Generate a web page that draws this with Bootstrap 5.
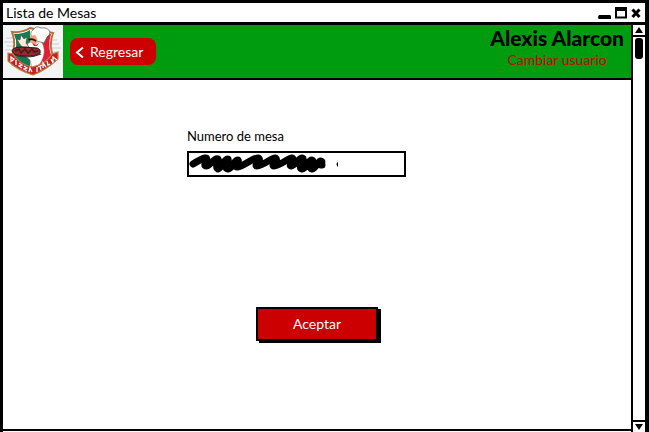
<!DOCTYPE html>
<html lang="es">
<head>
<meta charset="utf-8">
<meta name="viewport" content="width=device-width, initial-scale=1">
<title>Lista de Mesas</title>
<link href="https://cdn.jsdelivr.net/npm/bootstrap@5.3.0/dist/css/bootstrap.min.css" rel="stylesheet">
<style>
body { font-family: Lato, "Open Sans", sans-serif; font-size: 14px; line-height: 20px; color: #000; }
.app-window { border: 3px solid #000; border-right-width: 4px; border-bottom: 0; height: 100vh; }
.title-strip { border-bottom: 3px solid #000; padding: 0 4px 0 3px; height: 22px; }
.title-strip h1 { font-size: 14px; line-height: 18px; }
.win-btn { line-height: 0; }
.page-area { border-bottom: 2px solid #000; margin-bottom: 1px; }
.brand-bar { background: #009c10; border-bottom: 2px solid #000; height: 55px; }
.brand-logo { background: #f4f4f4; width: 60px; }
.back-btn, .back-btn:hover { background: #c00; color: #fff; border: 0; border-radius: 8px; width: 86px; height: 27px; margin-left: 7px; font-size: 14px; line-height: 20px; }
.user-box { padding-right: 7px; }
.user-name { font-size: 21px; line-height: 25px; font-weight: 900; }
.switch-link { color: #c00; }
.mesa-form { padding-top: 46px; }
.mesa-field { width: 219px; margin-right: 41px; }
.mesa-label { font-size: 13px; margin-bottom: 5px; }
.mesa-input, .mesa-input:focus { border: 2px solid #000; border-radius: 0; height: 26px; background: #fff; box-shadow: none; }
.scribble { left: 0; top: 0; pointer-events: none; }
.accept-btn, .accept-btn:hover { background: #c00; color: #fff; border: 2px solid #000; border-radius: 0; box-shadow: 3px 2px 0 #000; width: 122px; height: 34px; margin-top: 130px; font-size: 14px; line-height: 20px; }
.scroll-rail { width: 14px; border-left: 2px solid #000; }
.rail-btn { height: 12px; line-height: 0; }
.rail-up { border-bottom: 2px solid #000; }
.rail-down { border-top: 2px solid #000; }
.rail-thumb { width: 8px; height: 21px; background: #000; border-radius: 3px; margin-top: 1px; }
</style>
</head>
<body>
<div class="app-window d-flex flex-column overflow-hidden">
  <header class="title-strip d-flex align-items-center justify-content-between flex-shrink-0">
    <h1 class="fw-normal m-0">Lista de Mesas</h1>
    <div class="d-flex align-items-center gap-1">
      <button class="win-btn border-0 bg-transparent p-0" type="button" aria-label="Minimizar"><svg width="13" height="12"><path d="M1 8H12Q13 8 13 10V12H1Q0 12 0 10Z"/></svg></button>
      <button class="win-btn border-0 bg-transparent p-0" type="button" aria-label="Maximizar"><svg width="12" height="12"><path d="M1 1.5H11V10.5H1Z" fill="#fff" stroke="#000" stroke-width="2"/><path d="M0 2H12" stroke="#000" stroke-width="4"/></svg></button>
      <button class="win-btn border-0 bg-transparent p-0" type="button" aria-label="Cerrar"><svg width="10" height="12"><path d="M1.5 2.5L8.5 10M8.5 2.5L1.5 10" stroke="#000" stroke-width="3"/></svg></button>
    </div>
  </header>
  <div class="d-flex flex-grow-1">
    <div class="page-area flex-grow-1">
      <div class="brand-bar d-flex">
        <div class="brand-logo flex-shrink-0">
          <svg width="60" height="53" viewBox="0 0 60 53" role="img" aria-label="Pizza Italia">
            <path d="M3 13H12M1 17H13M4 21H12M2 25H12M48 15H54M47 19H56M48 23H58M47 27H56" stroke="#c9ccd6"/>
            <path d="M9 7Q19 8 27 3Q38 6 50 8Q45 21 51 33Q40 44 29 49Q18 44 8 34Q14 20 9 7Z" fill="#fff" stroke="#b5713b" stroke-width="2"/>
            <path d="M11 9Q21 9 27 5V44Q17 40 10 32Q16 20 11 9Z" fill="#167a55"/>
            <path d="M36 9L48 9Q44 21 49 33Q42 41 34 44Z" fill="#e41c35"/>
            <path d="M25 18L33 15L39 17Q43 25 40 33Q37 42 29 44L27 35L21 30Z" fill="#fff" stroke="#765" stroke-width=".6"/>
            <path d="M29 12Q26 8 30 5Q33 0 38 3Q45 2 47 7Q47 10 44 12L41 18L33 16Z" fill="#fff" stroke="#555" stroke-width=".7"/>
            <path d="M27 11L32 10L34 13L35 17L32 20L27 17Z" fill="#efa082"/>
            <path d="M26 15Q29 13 33 16" fill="none" stroke="#301010" stroke-width="1.8"/>
            <path d="M29 18L33 20L36 18L34 21L31 21Z" fill="#d52831"/>
            <path d="M16 18L14 14L17 15L18 10L21 14L24 12L23 18L26 22L19 22Z" fill="#ffe9db" stroke="#543" stroke-width=".6"/>
            <path d="M9 26Q10 22 19 22L34 23Q38 24 37 28Q32 32 21 31Q11 31 9 26Z" fill="#95292c" stroke="#2b1112"/>
            <path d="M12 26L16 24L18 28L22 24L25 28L29 24L31 27L35 26" stroke="#451a1c" stroke-width="1.6" fill="none"/>
            <path d="M9 29Q24 35 38 29" stroke="#333" stroke-width="1.2" fill="none"/>
            <path d="M5 28L10 29Q16 39 29 42Q43 39 49 29L55 27L55 34Q43 45 30 50Q14 45 5 36Z" fill="#c72027" stroke="#b78341" stroke-width="1.2"/>
            <path d="M8 37V32L11 34L9 36M13 35L13 40M16 38L19 40L16 41L19 43M21 41L24 43L21 44L24 46M26 47L27 43L29 47M34 42V47M35 42L39 40M37 41L38 45M40 43L40 38L43 42M44 36L45 40L47 39M48 34L50 38M50 37L50 32L54 35" fill="none" stroke="#fff" stroke-width="1.3"/>
          </svg>
        </div>
        <div class="d-flex align-items-center">
          <button class="back-btn btn d-flex align-items-center p-0" type="button"><svg class="ms-1 me-1" width="12" height="14" aria-hidden="true"><path d="M9 2.5L3 7.5L9 12.5" fill="none" stroke="#fff" stroke-width="2"/></svg><span>Regresar</span></button>
        </div>
        <div class="user-box ms-auto d-flex flex-column align-items-center">
          <span class="user-name">Alexis Alarcon</span>
          <a class="switch-link text-decoration-none" href="#">Cambiar usuario</a>
        </div>
      </div>
      <form class="mesa-form d-flex flex-column align-items-center">
        <div class="mesa-field">
          <label class="mesa-label d-block" for="mesa">Numero de mesa</label>
          <div class="position-relative">
            <input class="mesa-input form-control p-0" id="mesa" type="text">
            <svg class="scribble position-absolute" width="160" height="26" aria-hidden="true"><path d="M6 13Q14 8 18 7C23 6 15 15 19 15C23 15 28 6 31 8C33 10 27 16 31 18C35 17 38 7 41 8C43 10 36 17 41 18C46 17 48 8 51 9C53 11 46 15 50 16C56 16 65 7 71 7C76 8 66 15 70 15C76 15 84 7 88 7C93 8 83 15 87 15C93 15 101 7 105 7C109 8 101 15 104 15C109 14 112 7 115 7C119 8 110 17 115 18C120 17 122 8 125 9C128 10 121 17 125 18C130 17 131 9 134 10C137 11 131 14 135 14" fill="none" stroke="#000" stroke-width="7" stroke-linecap="round" stroke-linejoin="round"/><path d="M151 11Q148 13 151 16Z"/></svg>
          </div>
        </div>
        <button class="accept-btn btn p-0" type="button">Aceptar</button>
      </form>
    </div>
    <div class="scroll-rail d-flex flex-column align-items-center flex-shrink-0">
      <button class="rail-btn rail-up w-100 border-top-0 border-start-0 border-end-0 bg-white p-0" type="button" aria-label="Subir"><svg width="8" height="6"><path d="M4 0L8 6H0Z"/></svg></button>
      <div class="rail-thumb"></div>
      <button class="rail-btn rail-down mt-auto w-100 border-bottom-0 border-start-0 border-end-0 bg-white p-0" type="button" aria-label="Bajar"><svg width="8" height="6"><path d="M0 0H8L4 6Z"/></svg></button>
    </div>
  </div>
</div>
<script src="https://cdn.jsdelivr.net/npm/bootstrap@5.3.0/dist/js/bootstrap.bundle.min.js"></script>
</body>
</html>
